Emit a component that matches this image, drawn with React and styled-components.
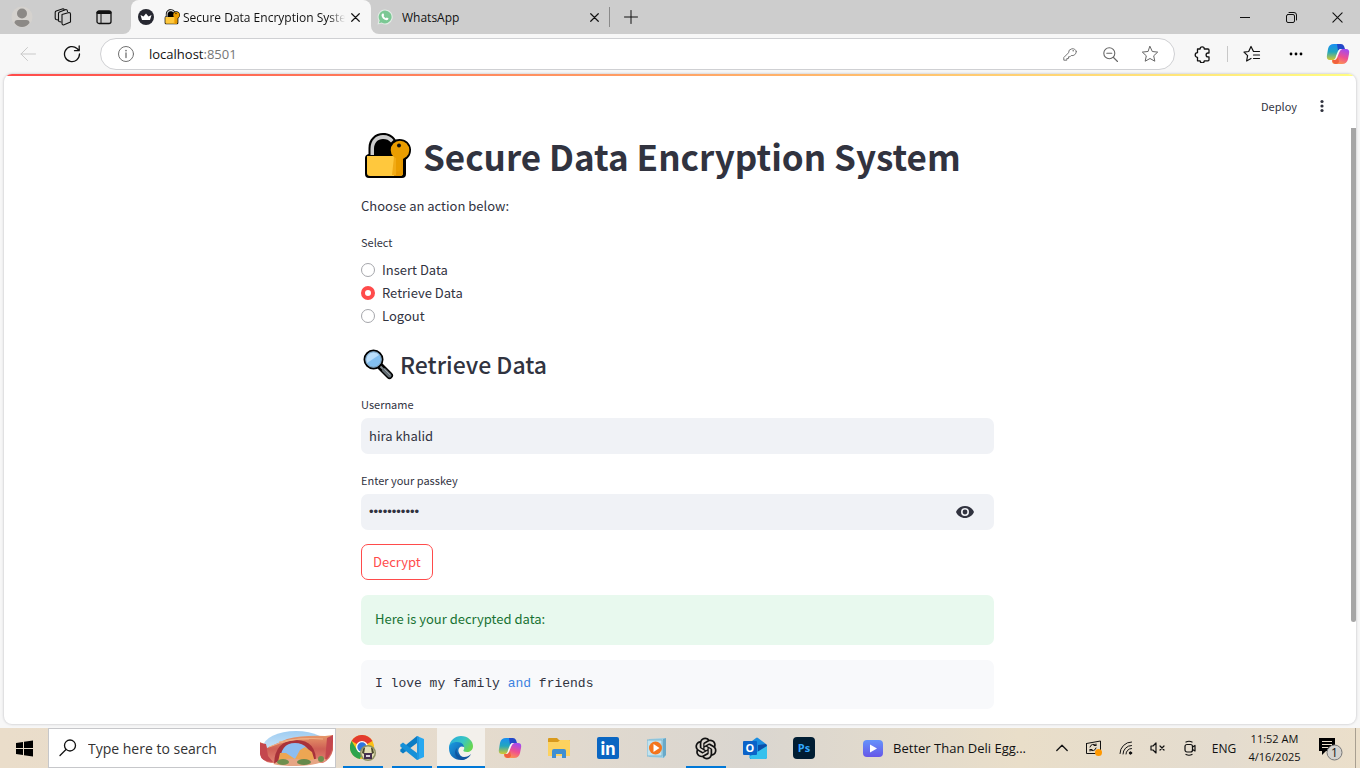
import React from "react";
import styled, { createGlobalStyle, css } from "styled-components";
import { AiOutlineOpenAI } from "react-icons/ai";

const shellFont = `"Open Sans", "Noto Sans", sans-serif`;
const appFont = `"Noto Sans CJK SC", "Open Sans", sans-serif`;
const codeFont = `"Liberation Mono", "DejaVu Sans Mono", monospace`;

const GlobalStyle = createGlobalStyle`
  *, *::before, *::after { box-sizing: border-box; }
  body { margin: 0; background: #f7f7f7; font-family: ${shellFont}; color: #111; }
  button, input { font: inherit; color: inherit; }
  button { border: 0; padding: 0; background: none; cursor: pointer; }
  svg { display: block; flex: none; }
`;

/* ---------- browser chrome ---------- */

const Screen = styled.div`
  display: flex;
  flex-direction: column;
  min-height: 100vh;
`;

const TabStrip = styled.header`
  display: flex;
  height: 34px;
`;

const StripStart = styled.div`
  display: flex;
  width: 131px;
  padding-left: 1px;
  background: #cdcdcd;
  border-radius: 0 0 8px 0;
`;

const IconButton = styled.button`
  display: flex;
  align-items: center;
  justify-content: center;
  width: ${(p) => p.$w || 40}px;
  height: ${(p) => (p.$h ? `${p.$h}px` : "100%")};
  flex: none;
  color: ${(p) => p.$color || "#111"};
`;

const ActiveTabBack = styled.div`
  width: 240px;
  background: linear-gradient(#cdcdcd 50%, #f7f7f7 50%);
`;

const Tab = styled.div`
  display: flex;
  align-items: center;
  height: 34px;
  font-size: 12px;
  padding: 0 6px 0 7px;
  ${(p) =>
    p.$active &&
    css`
      background: #f7f7f7;
      border-radius: 8px 8px 0 0;
    `}
`;

const TabTitle = styled.span`
  flex: 1;
  min-width: 0;
  margin-left: ${(p) => (p.$emoji ? 3 : 9)}px;
  overflow: hidden;
  white-space: nowrap;
  ${(p) =>
    p.$fade &&
    css`
      mask-image: linear-gradient(90deg, #000 90%, transparent 100%);
    `}
`;

const TabEmoji = styled.span`
  margin-left: 10px;
`;

const StripRest = styled.div`
  display: flex;
  flex: 1;
  align-items: center;
  background: #cdcdcd;
  border-radius: 0 0 0 8px;
`;

const IdleTab = styled(Tab)`
  width: 238px;
  padding: 0 5px 0 6px;
`;

const Divider = styled.span`
  width: 1px;
  height: ${(p) => p.$h || 16}px;
  background: #8a8a8a;
`;

const ToolbarDivider = styled(Divider)`
  margin: 0 2px 0 4px;
  background: #c8c8c8;
`;

const Spacer = styled.span`
  flex: 1;
`;

const Toolbar = styled.div`
  display: flex;
  align-items: center;
  height: 40px;
  padding: 0 2px 0 6px;
  background: #f7f7f7;
`;

const AddressBar = styled.form`
  display: flex;
  align-items: center;
  flex: 1;
  height: 32px;
  margin: 0 8px 0 6px;
  padding: 0 4px 0 5px;
  background: #fff;
  border: 1px solid #cfd0d3;
  border-radius: 16px;
`;

const Address = styled.p`
  flex: 1;
  margin: 0 0 0 3px;
  font-size: 13px;
  line-height: 20px;
  color: #111;
  span { color: #767676; }
`;

/* ---------- page ---------- */

const PageFrame = styled.main`
  display: flex;
  flex: 1;
  flex-direction: column;
  margin: 0 4px 4px;
  overflow: hidden;
  background: #fff;
  border-radius: 8px;
  box-shadow: 0 0 2px 1px #d9d9db;
  color: #31333f;
  font-family: ${appFont};
`;

const Rainbow = styled.div`
  height: 2px;
  background: linear-gradient(90deg, #ff4b4b, #fffd80);
`;

const PageHeader = styled.div`
  display: flex;
  align-items: center;
  justify-content: flex-end;
  height: 52px;
  padding: 8px 24px 0 0;
`;

const DeployButton = styled.button`
  margin-right: 15px;
  font-size: 11px;
  line-height: 18px;
`;

const ScrollArea = styled.div`
  display: flex;
  flex: 1;
`;

const ScrollTrack = styled.div`
  width: 5px;
  padding-bottom: 102px;
  display: flex;
`;

const ScrollThumb = styled.div`
  flex: 1;
  border-radius: 0 0 3px 3px;
  background: #a6a6a6;
`;

const Centered = styled.div`
  flex: 1;
  display: flex;
  justify-content: center;
`;

const Column = styled.section`
  width: 100%;
  max-width: 633px;
  padding-bottom: 15px;
`;

const Title = styled.h1`
  display: flex;
  align-items: center;
  gap: 12px;
  height: 56px;
  margin: 0;
  padding-left: 2px;
  font-size: 35px;
  line-height: 54px;
  font-weight: 700;
  white-space: nowrap;
`;

const Intro = styled.p`
  margin: 12px 0 16px;
  font-size: 13px;
  line-height: 20px;
`;

const RadioGroup = styled.fieldset`
  margin: 0;
  padding: 0;
  border: 0;
`;

const Caption = styled.span`
  display: block;
  font-size: 11px;
  line-height: 20px;
`;

const Choice = styled.label`
  display: flex;
  align-items: center;
  gap: 7px;
  height: 23px;
  font-size: 13px;
  line-height: 23px;
`;

const Choices = styled.div`
  padding-top: 6px;
`;

const Radio = styled.input`
  appearance: none;
  width: 14px;
  height: 14px;
  margin: 0;
  border: 1px solid #a5a6ab;
  border-radius: 50%;
  background: #fff;
  &:checked { border: 4px solid #ff4b4b; }
`;

const SubTitle = styled.h2`
  display: flex;
  align-items: center;
  gap: 6px;
  height: 34px;
  margin: 20px 0 13px;
  padding-left: 1px;
  font-size: 23px;
  line-height: 32px;
  font-weight: 500;
`;

const Field = styled.label`
  display: block;
  margin-bottom: ${(p) => p.$gap}px;
`;

const InputBox = styled.span`
  display: flex;
  align-items: center;
  height: 36px;
  margin-top: 4px;
  padding: 0 8px;
  background: #f0f2f6;
  border-radius: 7px;
`;

const TextInput = styled.input`
  flex: 1;
  min-width: 0;
  padding: 0;
  border: 0;
  outline: 0;
  background: transparent;
  font-size: 13px;
  line-height: 20px;
  &[type="password"] { font-family: "Liberation Sans", sans-serif; }
`;

const DecryptButton = styled.button`
  height: 36px;
  padding: 0 11px;
  border: 1px solid #ff4b4b;
  border-radius: 7px;
  color: #ff4b4b;
  font-size: 13px;
  line-height: 20px;
`;

const Alert = styled.div`
  height: 50px;
  margin: 15px 0;
  padding: 14px;
  border-radius: 7px;
  background: #e8f9ee;
  color: #177233;
  font-size: 13px;
  line-height: 20px;
`;

const CodeBlock = styled.pre`
  height: 49px;
  margin: 0;
  padding: 14px;
  border-radius: 7px;
  background: #f8f9fb;
  font-family: ${codeFont};
  font-size: 13px;
  line-height: 20px;
  span { color: #3b82e0; }
`;

/* ---------- taskbar ---------- */

const Taskbar = styled.footer`
  display: flex;
  height: 40px;
  background: linear-gradient(90deg, #eaddca 0%, #e5dbcd 35%, #dad6d0 55%, #e9dec9 75%, #e4dccf 90%, #ebdfca 100%);
`;

const SearchBox = styled.label`
  display: flex;
  align-items: center;
  width: 288px;
  padding: 0 2px 0 10px;
  background: #fff;
  border: 1px solid #c6c7ca;
`;

const SearchInput = styled.input`
  flex: 1;
  min-width: 0;
  margin-left: 11px;
  padding: 0;
  border: 0;
  outline: 0;
  background: transparent;
  font-size: 14px;
  &::placeholder { color: #333; opacity: 1; }
`;

const Apps = styled.nav`
  display: flex;
  gap: 1px;
  margin-left: 3px;
`;

const AppButton = styled.button`
  display: flex;
  align-items: center;
  justify-content: center;
  width: 48px;
  height: 40px;
  background: ${(p) =>
    p.$running
      ? `linear-gradient(#0078d7, #0078d7) center bottom / ${p.$front ? 48 : 40}px 2px no-repeat ${p.$front ? "#f3f0eb" : "transparent"}`
      : "none"};
`;

const News = styled.button`
  display: flex;
  align-items: center;
  gap: 10px;
  margin-right: 20px;
  font-size: 13px;
  white-space: nowrap;
`;

const Lang = styled.button`
  width: 36px;
  font-size: 12px;
`;

const Clock = styled.div`
  width: 65px;
  padding-top: 2px;
  font-size: 11px;
  line-height: 18px;
  text-align: center;
`;

const TrayEnd = styled.div`
  width: 5px;
  border-left: 1px solid #a89f91;
`;

/* ---------- drawings ---------- */

const Line = ({ w = 20, h = w, box, sw = 1, children }) => (
  <svg width={w} height={h} viewBox={box || `0 0 ${w} ${h}`} fill="none" stroke="currentColor" strokeWidth={sw} strokeLinecap="round" strokeLinejoin="round">
    {children}
  </svg>
);

const LockEmoji = ({ size }) => (
  <svg width={size} height={size} viewBox="0 0 48 48">
    <path d="M5.500 22V16C5.500 7 12 1 20 1c6 0 10 2.500 12.500 6.500 8-2.500 15.500 3 15.500 10 0 5-2 8-5 10V42q0 4-4 4H6q-4 0-4-4V26q0-3 3.500-4z" fill="#000" />
    <path d="M7.500 23v-6C7.500 8 13 3 20 3c5 0 8.500 2 10.500 5l-2.500 2.500C26 8 23.500 7 20 7c-5.500 0-9 4-9 10v6z" fill="#ccc" />
    <path d="M4 24h36v17q0 3-3 3H7q-3 0-3-3z" fill="#ffc83d" />
    <path d="M33 24h7v17q0 3-3 3h-6q2-8 2-20z" fill="#e59700" />
    <path d="M31 25h3l-1 18h-4z" fill="#f2ab15" />
    <circle cx="37" cy="18" r="9.300" fill="#ea9d00" />
    <path d="M33 24h5v13l-3 3-2-3z" fill="#ea9d00" />
    <circle cx="36" cy="13.500" r="2" fill="#111" />
  </svg>
);

const MagnifierEmoji = () => (
  <svg width="32" height="32" viewBox="0 0 32 32">
    <path d="M18 18L27.500 27.500" stroke="#000" strokeWidth="7" strokeLinecap="round" />
    <path d="M17 17L22 22" stroke="#858d92" strokeWidth="2" />
    <path d="M22 22L27.500 27.500" stroke="#636d73" strokeWidth="4" strokeLinecap="round" />
    <path d="M22.500 21.500L28 27" stroke="#9aa1a5" strokeWidth="1" strokeLinecap="round" />
    <circle cx="11.500" cy="11.500" r="9" fill="#83bff0" stroke="#000" strokeWidth="2" />
    <circle cx="11.500" cy="11.500" r="7.800" fill="#83bff0" stroke="#7a94a8" strokeWidth="1" />
    <path d="M5 15C2 7 11 1 17 7z" fill="#b9ddfa" />
  </svg>
);

const Profile = () => (
  <svg width="22" height="22" viewBox="0 0 22 22">
    <circle cx="11" cy="11" r="10.500" fill="#d5d2ce" />
    <circle cx="11" cy="7.500" r="5" fill="#8c8986" />
    <path d="M3.500 17q0-3 3-3h9q3 0 3 3-3 4-7.500 4t-7.500-4z" fill="#8c8986" />
  </svg>
);

const Workspaces = () => (
  <Line w={18} sw={1.1}>
    <path d="M8 6.500l7-2q1.500 0 1.500 1.500v8l-7 3q-1.500 0-1.500-1.500z" fill="#cdcdcd" />
    <path d="M7 14l-2-.500q-.500-.500-.500-1.500V5.500q0-1 1-1.500L12 1.500q1.500 0 1.500 2" />
    <path d="M4 12l-2-.500q-.800-.500-.800-1.500V4.500q0-1 1-1.500L9 .800q1 0 1.200.800" />
  </Line>
);

const VerticalTabs = () => (
  <Line w={16} sw={1.3}>
    <rect x="1" y="2" width="14" height="12.500" rx="2" />
    <path d="M2 3.500h12" strokeWidth="3" />
    <path d="M5 5v9" strokeWidth="1" />
  </Line>
);

const Crown = () => (
  <svg width="16" height="16" viewBox="0 0 16 16">
    <circle cx="8" cy="8" r="8" fill="#262730" />
    <path d="M2.500 6l3 1.500L8 4.500l2.500 3 3-1.500-1.500 5H4z" fill="#fff" />
  </svg>
);

const WhatsApp = () => (
  <svg width="16" height="16" viewBox="0 0 16 16">
    <path d="M8 .500a7.500 7.500 0 1 1-3.500 14L.500 15.500l1-4A7.500 7.500 0 0 1 8 .500z" fill="#e2ece5" />
    <path d="M8 1.500a6.500 6.500 0 1 1-3.400 12L2 14.200l.700-2.700A6.500 6.500 0 0 1 8 1.500z" fill="#7bc894" />
    <path d="M5.500 4.500l1 0 .700 1.700-.700.900q.800 1.500 2.300 2.200l.900-.900 1.800.900q0 2-2.200 2Q5 10 4.500 6.500q0-1.300 1-2z" fill="#fff" />
  </svg>
);

const Cross = ({ s = 9, sw = 1.3 }) => (
  <Line w={s} box="0 0 10 10" sw={sw}><path d="M.800.800l8.400 8.400M9.200.800L.800 9.200" /></Line>
);

const Copilot = () => (
  <svg width="24" height="24" viewBox="0 0 24 24">
    <defs>
      <linearGradient id="cpLeft" x1="0" y1="0" x2="0" y2="1">
        <stop offset="0" stopColor="#188ef4" /><stop offset=".5" stopColor="#22a6bd" /><stop offset="1" stopColor="#d6c92f" />
      </linearGradient>
      <linearGradient id="cpRight" x1=".7" y1="0" x2=".3" y2="1">
        <stop offset="0" stopColor="#a34af0" /><stop offset=".5" stopColor="#ee4f91" /><stop offset="1" stopColor="#ff9b4a" />
      </linearGradient>
    </defs>
    <path d="M8 2h7l-5 14q-1 2-3 2H4q-4 0-3-5l1-6q1-5 6-5z" fill="url(#cpLeft)" />
    <path d="M16 22H9q-3 0-3-3 3 0 4-3l3-7q1-2 3-2h4q4 0 3 5l-1 5q-1 5-6 5z" fill="url(#cpRight)" />
    <path d="M11 2h4q2 0 3 2l1 3h-4q-2 0-3 2z" fill="#2348c9" />
    <path d="M6 18h4l2-3 1 5q-1 2-3 2-3 0-4-4z" fill="#f0603f" />
    <path d="M12 9q1-2 3-2h1q-2 1-3 4l-2 5q-1 2-3 2 2-2 2-4z" fill="#f7f7f7" />
  </svg>
);

const starPath = "M9 1.500l2.300 5 5.400.600-4 3.700 1.100 5.400L9 13.500l-4.800 2.700 1.100-5.400-4-3.700 5.400-.600z";

const Eye = () => (
  <svg width="18" height="12" viewBox="0 0 18 12">
    <path fillRule="evenodd" fill="#31333f" d="M9 0c4 0 7.500 2.500 9 6-1.500 3.500-5 6-9 6S1.500 9.500 0 6c1.500-3.500 5-6 9-6zM9 2a4 4 0 1 0 0 8 4 4 0 0 0 0-8zM9 3.600a2.400 2.400 0 1 1 0 4.800 2.400 2.400 0 0 1 0-4.800z" />
  </svg>
);

const WindowsLogo = () => (
  <svg width="17" height="17" viewBox="0 0 17 17">
    <path d="M0 3l7-1v6H0zM8 1.800L17 .500V8H8zM0 9h7v6l-7-1zM8 9h9v7.500l-9-1.300z" fill="#000" />
  </svg>
);

const CanyonArt = () => (
  <svg width="74" height="36" viewBox="0 0 74 36">
    <defs>
      <linearGradient id="sky" x1="0" y1="0" x2="0" y2="1"><stop offset="0" stopColor="#9fcdf2" /><stop offset="1" stopColor="#e5f2fb" /></linearGradient>
      <linearGradient id="rock" x1="0" y1="0" x2="0" y2="1"><stop offset="0" stopColor="#e79a6a" /><stop offset=".5" stopColor="#cf5f55" /><stop offset="1" stopColor="#e28373" /></linearGradient>
    </defs>
    <ellipse cx="37" cy="17" rx="33" ry="16" fill="url(#sky)" />
    <path d="M1 12l6 3 1 3 20-9q16-4 38-3l8-1q2 7 0 15-2 9-10 13H12Q1 31 1 22z" fill="url(#rock)" />
    <path d="M1 13l6 1 2 12 5 6Q2 32 1 24zM68 8l6-3q1 19-8 26z" fill="#c4474e" />
    <path d="M15 34q1-24 22-24t20 24z" fill="#a8323a" />
    <path d="M21 33q0-20 15-20t18 20z" fill="#8dbdf0" />
    <path d="M19 32l2-9 6 0 9 6 5-9 5-3 7 5 3 10z" fill="#eda653" />
    <path d="M14 34q12-7 24-5t18 0q8-2 12 1-12 6-31 6-15 0-23-2z" fill="#e6a584" />
    <ellipse cx="24" cy="32" rx="6" ry="3" fill="#6f8f4e" />
    <ellipse cx="45" cy="32" rx="7" ry="3" fill="#66894b" />
    <ellipse cx="62" cy="29" rx="3" ry="3" fill="#6f8f4e" />
    <path d="M10 17q22-9 40-8M20 12q22-5 44-3" stroke="#f0b084" strokeWidth="1" fill="none" />
  </svg>
);

const Chrome = () => (
  <svg width="26" height="26" viewBox="0 0 26 26">
    <circle cx="12" cy="12" r="12" fill="#fbc116" />
    <path d="M12 12L1.600 6A12 12 0 0 1 22.400 6z" fill="#e33b2e" />
    <path d="M1.600 6L7 15l5 3-2 6A12 12 0 0 1 1.600 6z" fill="#2da44e" />
    <circle cx="12" cy="12" r="6" fill="#fff" />
    <circle cx="12" cy="12" r="4.700" fill="#2f75e0" />
    <circle cx="18" cy="18" r="8" fill="#8e9163" />
    <circle cx="18" cy="18" r="6.500" fill="#e4dfb6" />
    <path d="M12 18q1-6 3-5l-1 6zM24 18q-1-6-3-5l1 6z" fill="#4a4a2c" />
    <path d="M14 18h8v6h-8z" fill="#45304d" />
    <path d="M16 20h4v2h-4z" fill="#ddd4dc" />
  </svg>
);

const VsCode = () => (
  <svg width="24" height="24" viewBox="0 0 24 24">
    <path d="M17 0l7 3v18l-7 3z" fill="#28a8f0" />
    <path d="M17 0v7L3 17.500.300 15.500v-2z" fill="#0a7cc4" />
    <path d="M17 24v-7L3 6.500.300 8.500v2z" fill="#1590d8" />
    <path d="M17 0l2 1v22l-2 1z" fill="#2197e0" />
  </svg>
);

const EdgeLogo = () => (
  <svg width="24" height="24" viewBox="0 0 24 24">
    <defs>
      <linearGradient id="edgeTop" x1="0" y1="0" x2="1" y2=".5"><stop offset="0" stopColor="#28a8e0" /><stop offset=".6" stopColor="#38c6c3" /><stop offset="1" stopColor="#66d654" /></linearGradient>
      <linearGradient id="edgeLow" x1="0" y1="0" x2="1" y2="1"><stop offset="0" stopColor="#1b9de2" /><stop offset="1" stopColor="#0c4a9a" /></linearGradient>
    </defs>
    <path d="M0 11C1 4 6 0 12 0c7 0 12 5 12 10 0 4-3 6-6 6-3 0-4-1-3.500-2 2-2 0-6-5-6-4 0-8 2-9.500 3z" fill="url(#edgeTop)" />
    <path d="M0 12c0-4 4-6 8-6 5 0 7 3 7 5-4-2-7 2-5 6 1 3 4 5 8 5-6 4-18 2-18-10z" fill="url(#edgeLow)" />
    <path d="M8 12c-2 5 2 9 7 9 3 0 5-1 7-3-2 4-6 6-10 6-5-1-8-8-4-12z" fill="#10549f" />
  </svg>
);

const Folder = () => (
  <svg width="22" height="20" viewBox="0 0 22 20">
    <path d="M0 1q0-1 1-1h8l2 2h10q1 0 1 1v14H0z" fill="#d99a1c" />
    <path d="M0 4h10l2-2h9q1 0 1 1v15H0z" fill="#fdd25f" />
    <path d="M4 20v-7q0-2 2-2h10q2 0 2 2v7h-4v-4H8v4z" fill="#3f8fd2" />
  </svg>
);

const LinkedIn = () => (
  <svg width="22" height="22" viewBox="0 0 22 22">
    <rect width="22" height="22" rx="2" fill="#0a66c2" />
    <text x="11" y="17.500" textAnchor="middle" fontFamily="Lato, sans-serif" fontWeight="900" fontSize="18" fill="#fff">in</text>
  </svg>
);

const MediaPlayer = () => (
  <svg width="21" height="20" viewBox="0 0 21 20">
    <path d="M2 1l15-1 2 1v16l-2 3-15-1z" fill="#9ed0e6" />
    <path d="M16 1l3-1v17l-3 3z" fill="#69a9c8" />
    <path d="M0 2h15v16H0z" fill="#c2e3ef" stroke="#7fb8d1" />
    <circle cx="8.500" cy="10" r="6.500" fill="#f4751d" />
    <path d="M6.500 6l6 4-6 4z" fill="#fff" />
  </svg>
);

const Outlook = () => (
  <svg width="24" height="22" viewBox="0 0 24 22">
    <path d="M5 7l8-6q1-1 2 0l8 6q1 1 1 2v11q0 2-2 2H7z" fill="#1b8de0" />
    <path d="M15 8l8-1q1 1 1 3l-9 6z" fill="#0b4fa8" />
    <path d="M24 9v11q0 2-2 2H8l-2-2z" fill="#35c1ee" />
    <rect x="0" y="4" width="14" height="14" rx="1" fill="#0a63c9" />
    <text x="7" y="15" textAnchor="middle" fontFamily="Open Sans, sans-serif" fontWeight="700" fontSize="11" fill="#fff">O</text>
  </svg>
);

const Photoshop = () => (
  <svg width="22" height="22" viewBox="0 0 22 22">
    <rect width="22" height="22" rx="4" fill="#001d33" />
    <text x="11" y="15" textAnchor="middle" fontFamily="Open Sans, sans-serif" fontWeight="700" fontSize="11" fill="#31a8ff">Ps</text>
  </svg>
);

const NewsIcon = () => (
  <svg width="20" height="17" viewBox="0 0 20 17">
    <defs><linearGradient id="news" x1="0" y1="0" x2="0" y2="1"><stop offset="0" stopColor="#6593fb" /><stop offset="1" stopColor="#6657e8" /></linearGradient></defs>
    <rect width="20" height="17" rx="4" fill="url(#news)" />
    <path d="M7 4.500l7 4-7 4z" fill="#fff" />
  </svg>
);

const Notifications = () => (
  <svg width="26" height="26" viewBox="0 0 26 26">
    <path d="M1 3h16v13h-9l-4 4v-4H1z" fill="#000" />
    <path d="M4 6.500h10M4 9.500h10M4 12.500h6" stroke="#eadfca" />
    <circle cx="16.500" cy="17.500" r="7.500" fill="#d4d2ce" stroke="#777" />
    <text x="16.500" y="22" textAnchor="middle" fontFamily="Open Sans, sans-serif" fontSize="12" fill="#111">1</text>
  </svg>
);

const actions = ["Insert Data", "Retrieve Data", "Logout"];

const apps = [
  { name: "Chrome", icon: <Chrome />, running: true },
  { name: "Visual Studio Code", icon: <VsCode />, running: true },
  { name: "Edge", icon: <EdgeLogo />, running: true, front: true },
  { name: "Copilot", icon: <Copilot /> },
  { name: "File Explorer", icon: <Folder /> },
  { name: "LinkedIn", icon: <LinkedIn /> },
  { name: "Media Player", icon: <MediaPlayer /> },
  { name: "ChatGPT", icon: <AiOutlineOpenAI size={28} />, running: true },
  { name: "Outlook", icon: <Outlook /> },
  { name: "Photoshop", icon: <Photoshop /> },
];

function Browser() {
  return (
    <>
      <TabStrip>
        <StripStart>
          <IconButton $w={41} aria-label="Profile"><Profile /></IconButton>
          <IconButton $w={41} aria-label="Workspaces"><Workspaces /></IconButton>
          <IconButton $w={41} aria-label="Tab actions"><VerticalTabs /></IconButton>
        </StripStart>
        <ActiveTabBack>
          <Tab $active>
            <Crown />
            <TabEmoji><LockEmoji size={16} /></TabEmoji>
            <TabTitle $emoji $fade>Secure Data Encryption System</TabTitle>
            <IconButton $w={20} aria-label="Close tab"><Cross /></IconButton>
          </Tab>
        </ActiveTabBack>
        <StripRest>
          <IdleTab>
            <WhatsApp />
            <TabTitle>WhatsApp</TabTitle>
            <IconButton $w={20} aria-label="Close tab"><Cross /></IconButton>
          </IdleTab>
          <Divider $h={20} />
          <IconButton $w={42} aria-label="New tab">
            <Line w={14}><path d="M7 .500v13M.500 7h13" /></Line>
          </IconButton>
          <Spacer />
          <IconButton $w={46} aria-label="Minimize"><Line w={10}><path d="M0 5.500h10" /></Line></IconButton>
          <IconButton $w={46} aria-label="Restore">
            <Line w={11}><rect x=".500" y="2.500" width="8" height="8" rx="1.500" /><path d="M3 .500h5q2.500 0 2.500 2.500v5" /></Line>
          </IconButton>
          <IconButton $w={46} aria-label="Close"><Cross s={11} sw={1} /></IconButton>
        </StripRest>
      </TabStrip>
      <Toolbar>
        <IconButton $w={44} aria-label="Back" $color="#c9c9c9">
          <Line w={16}><path d="M15.500 8H1M7.500 1.500L1 8l6.500 6.500" /></Line>
        </IconButton>
        <IconButton $w={44} aria-label="Refresh">
          <Line w={18} sw={1.3}><path d="M16.500 9A7.500 7.500 0 1 1 14 3.500l2 2M16.200 1v4.700h-4.700" /></Line>
        </IconButton>
        <AddressBar>
          <IconButton type="button" $w={40} aria-label="Site information" $color="#707070">
            <Line w={16}><circle cx="8" cy="8" r="7.500" /><path d="M8 7v4.500" strokeWidth="1.300" /><path d="M8 4.600v.100" strokeWidth="1.600" /></Line>
          </IconButton>
          <Address>localhost<span>:8501</span></Address>
          <IconButton type="button" aria-label="Saved passwords" $color="#777">
            <Line w={14}><path d="M13.300 4.500a4 4 0 0 0-7.800 1.300L.800 10.500v2.700h3v-1.700h1.700V9.800h1.500l1.200-1.300a4 4 0 0 0 5.100-4z" /><path d="M10.200 3.700v.100" strokeWidth="1.600" /></Line>
          </IconButton>
          <IconButton type="button" aria-label="Zoom" $color="#666">
            <Line w={15} sw={1.1}><circle cx="6.300" cy="6.300" r="5.500" /><path d="M10.500 10.500l4 4M3.800 6.300h5" /></Line>
          </IconButton>
          <IconButton type="button" aria-label="Add to favorites" $color="#666"><Line w={18}><path d={starPath} /></Line></IconButton>
        </AddressBar>
        <IconButton aria-label="Extensions">
          <Line w={18} sw={1.3}><path d="M3.500 4h2.600a2.100 2.100 0 0 1 4.200 0h3.700q1 0 1 1v3h-1a1.900 1.900 0 0 0 0 3.800h1v3q0 1-1 1h-3.700a2.100 2.100 0 0 1-4.200 0H3.500v-3.500a2.300 2.300 0 0 1 0-4.600z" /></Line>
        </IconButton>
        <ToolbarDivider />
        <IconButton $w={44} aria-label="Favorites">
          <Line w={18} sw={1.2}><path d="M11 6.500h-.500L8 1.500l-2.300 5-4.700.600 3.600 3.600L3.600 16 8 13.500M11.500 6.500h5M10.500 10h6M10.500 13.500h6" /></Line>
        </IconButton>
        <IconButton $w={44} aria-label="Settings and more">
          <svg width="14" height="4" viewBox="0 0 14 4"><circle cx="2" cy="2" r="1.400" /><circle cx="7" cy="2" r="1.400" /><circle cx="12" cy="2" r="1.400" /></svg>
        </IconButton>
        <IconButton aria-label="Copilot"><Copilot /></IconButton>
      </Toolbar>
    </>
  );
}

function EncryptionPage() {
  return (
    <PageFrame>
      <Rainbow />
      <PageHeader>
        <DeployButton>Deploy</DeployButton>
        <IconButton $w={20} $h={20} aria-label="Menu">
          <svg width="4" height="14" viewBox="0 0 4 14" fill="#31333f"><circle cx="2" cy="2.500" r="1.600" /><circle cx="2" cy="7" r="1.600" /><circle cx="2" cy="11.500" r="1.600" /></svg>
        </IconButton>
      </PageHeader>
      <ScrollArea>
        <Centered>
          <Column>
            <Title><LockEmoji size={48} />Secure Data Encryption System</Title>
            <Intro>Choose an action below:</Intro>
            <RadioGroup aria-labelledby="action-caption">
              <Caption id="action-caption">Select</Caption>
              <Choices>
                {actions.map((a) => (
                  <Choice key={a}>
                    <Radio type="radio" name="action" defaultChecked={a === "Retrieve Data"} />
                    {a}
                  </Choice>
                ))}
              </Choices>
            </RadioGroup>
            <SubTitle><MagnifierEmoji />Retrieve Data</SubTitle>
            <Field $gap={16}>
              <Caption>Username</Caption>
              <InputBox><TextInput type="text" defaultValue="hira khalid" /></InputBox>
            </Field>
            <Field $gap={14}>
              <Caption>Enter your passkey</Caption>
              <InputBox>
                <TextInput type="password" defaultValue="hira-khalid" />
                <IconButton type="button" $w={42} $h={30} aria-label="Show passkey"><Eye /></IconButton>
              </InputBox>
            </Field>
            <DecryptButton>Decrypt</DecryptButton>
            <Alert role="status">Here is your decrypted data:</Alert>
            <CodeBlock>I love my family <span>and</span> friends</CodeBlock>
          </Column>
        </Centered>
        <ScrollTrack><ScrollThumb /></ScrollTrack>
      </ScrollArea>
    </PageFrame>
  );
}

function SystemTaskbar() {
  return (
    <Taskbar>
      <IconButton $w={48} aria-label="Start"><WindowsLogo /></IconButton>
      <SearchBox>
        <Line w={18} sw={1.3}><circle cx="11" cy="6.500" r="5.500" /><path d="M7 10.500L1 16.500" /></Line>
        <SearchInput type="text" placeholder="Type here to search" aria-label="Search" />
        <CanyonArt />
      </SearchBox>
      <Apps>
        {apps.map((a) => (
          <AppButton key={a.name} aria-label={a.name} $running={a.running} $front={a.front}>{a.icon}</AppButton>
        ))}
      </Apps>
      <Spacer />
      <News><NewsIcon />Better Than Deli Egg...</News>
      <IconButton $w={32} aria-label="Show hidden icons"><Line w={12} h={8} sw={1.3}><path d="M.800 6.500L6 1.300l5.200 5.200" /></Line></IconButton>
      <IconButton $w={32} aria-label="Updates">
        <Line w={18}>
          <path d="M1.500 4.500l14-2.500v12M11 14.500H1.500v-10" /><path d="M5 8a3.500 3.500 0 0 1 6-1.500V5M11 6.500H9M11 9a3.500 3.500 0 0 1-6 1.500V12M5 10.500h2" />
          <circle cx="13.500" cy="13.500" r="3.500" fill="#ff9800" stroke="none" />
        </Line>
      </IconButton>
      <IconButton $w={32} aria-label="Network">
        <Line w={14}><path d="M1 12.500A11.500 11.500 0 0 1 12.500 1M4 13A8.500 8.500 0 0 1 12.500 4.500M7 13a5.500 5.500 0 0 1 5.500-5.500" /><circle cx="11.500" cy="12" r="1.200" fill="currentColor" /></Line>
      </IconButton>
      <IconButton $w={32} aria-label="Volume muted">
        <Line w={16} h={12} sw={1.2}><path d="M1 4h2l3-3v10L3 8H1zM10 4l4 4M14 4l-4 4" /></Line>
      </IconButton>
      <IconButton $w={32} aria-label="Meet now">
        <Line w={14} h={16} sw={1.2}><rect x="2" y="4.500" width="7.500" height="7.500" rx="2" /><path d="M9.500 7l2.500-1.500v5.500L9.500 9.500M3 2q3-1.500 6 0M3 14.500q3 1.500 6 0" /></Line>
      </IconButton>
      <Lang>ENG</Lang>
      <Clock>11:52 AM<br />4/16/2025</Clock>
      <IconButton $w={48} aria-label="Notifications"><Notifications /></IconButton>
      <TrayEnd />
    </Taskbar>
  );
}

export default function App() {
  return (
    <Screen>
      <GlobalStyle />
      <Browser />
      <EncryptionPage />
      <SystemTaskbar />
    </Screen>
  );
}
